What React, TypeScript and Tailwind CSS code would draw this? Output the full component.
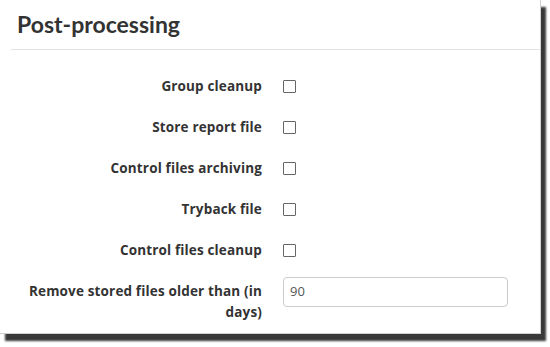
import React from "react";

const rows = [
  "Group cleanup",
  "Store report file",
  "Control files archiving",
  "Tryback file",
  "Control files cleanup",
];

function Box() {
  return (
    <span className="block w-[13px] h-[13px] border border-[#666] rounded-[1px] bg-white" />
  );
}

export default function App() {
  return (
    <div className="w-[550px] h-[347px] bg-white overflow-hidden" style={{ fontFamily: '"Open Sans", "DejaVu Sans", sans-serif' }}>
      <div className="w-[541px] h-[334px] bg-white border-r border-b border-[#d0d0d0] shadow-[5px_7px_2px_rgba(0,0,0,0.78)] flex flex-col">
        <div className="ml-[11px] h-[50px] border-b border-[#e3e3e3] pl-[6px] pt-[9px]">
          <h2 className="text-[23px] leading-[30px] font-bold text-[#333]" style={{ fontFamily: '"Lato", sans-serif' }}>Post-processing</h2>
        </div>
        <div className="pt-[16px]">
          {rows.map((r) => (
            <div key={r} className="flex items-center h-[41px]">
              <div className="w-[262px] pl-[20px] text-right text-[13.5px] tracking-[0.15px] font-bold text-[#333]">{r}</div>
              <div className="ml-[21px]">
                <Box />
              </div>
            </div>
          ))}
          <div className="flex items-start">
            <div className="w-[262px] pl-[20px] pt-[10px] text-right text-[13.5px] tracking-[0.15px] leading-[21px] font-bold text-[#333]">
              Remove stored files older than (in days)
            </div>
            <div className="ml-[21px] mt-[6px] w-[225px] h-[30px] border border-[#ccc] rounded-[4px] flex items-center px-[6px] text-[13px] text-[#555]">
              90
            </div>
          </div>
        </div>
      </div>
    </div>
  );
}
